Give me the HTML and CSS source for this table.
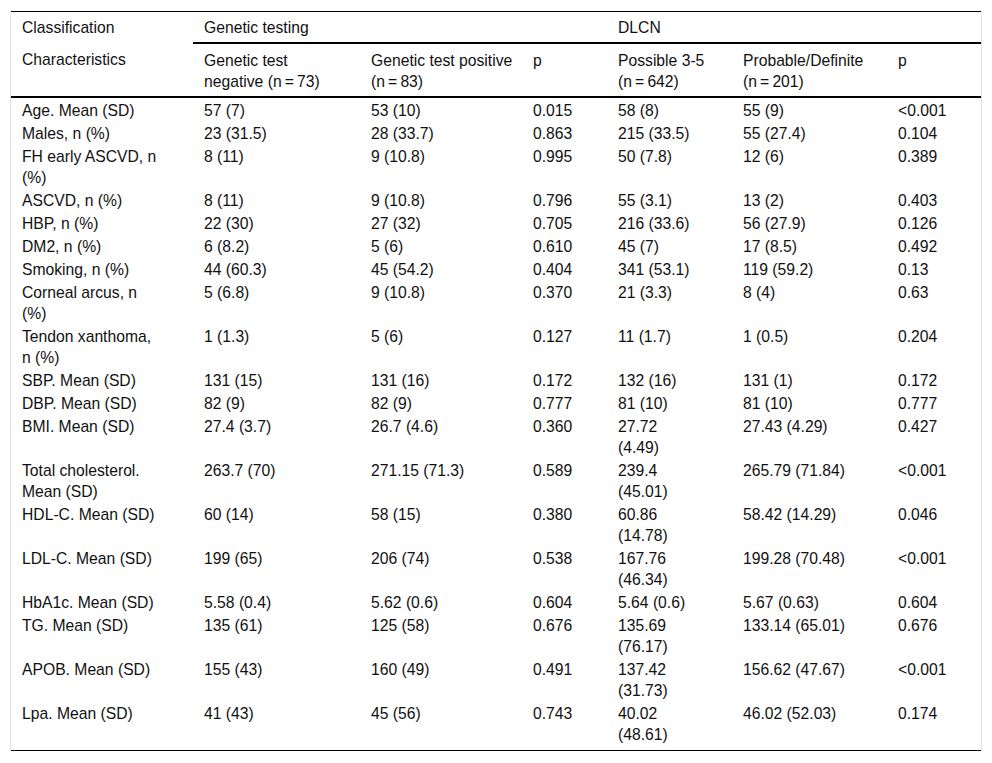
FILE: index.html
```html
<!DOCTYPE html>
<html lang="en">
<head>
<meta charset="utf-8">
<title>Characteristics by genetic testing and DLCN</title>
<link rel="stylesheet" href="styles.css">
</head>
<body>
<div class="table-wrap">
<table class="data-table">
<colgroup>
<col class="c1"><col class="c2"><col class="c3"><col class="c4"><col class="c5"><col class="c6"><col class="c7">
</colgroup>
<thead>
<tr class="group-row">
<th>Classification</th>
<th colspan="3" class="group">Genetic testing</th>
<th colspan="3" class="group">DLCN</th>
</tr>
<tr class="sub-row">
<th>Characteristics</th>
<th class="nw">Genetic test<br>negative (n&#8201;=&#8201;73)</th>
<th class="nw">Genetic test positive<br>(n&#8201;=&#8201;83)</th>
<th>p</th>
<th class="nw">Possible 3-5<br>(n&#8201;=&#8201;642)</th>
<th class="nw">Probable/Definite<br>(n&#8201;=&#8201;201)</th>
<th>p</th>
</tr>
</thead>
<tbody>
<tr><td>Age. Mean (SD)</td><td>57 (7)</td><td>53 (10)</td><td>0.015</td><td>58 (8)</td><td>55 (9)</td><td>&lt;0.001</td></tr>
<tr><td>Males, n (%)</td><td>23 (31.5)</td><td>28 (33.7)</td><td>0.863</td><td>215 (33.5)</td><td>55 (27.4)</td><td>0.104</td></tr>
<tr><td>FH early ASCVD, n (%)</td><td>8 (11)</td><td>9 (10.8)</td><td>0.995</td><td>50 (7.8)</td><td>12 (6)</td><td>0.389</td></tr>
<tr><td>ASCVD, n (%)</td><td>8 (11)</td><td>9 (10.8)</td><td>0.796</td><td>55 (3.1)</td><td>13 (2)</td><td>0.403</td></tr>
<tr><td>HBP, n (%)</td><td>22 (30)</td><td>27 (32)</td><td>0.705</td><td>216 (33.6)</td><td>56 (27.9)</td><td>0.126</td></tr>
<tr><td>DM2, n (%)</td><td>6 (8.2)</td><td>5 (6)</td><td>0.610</td><td>45 (7)</td><td>17 (8.5)</td><td>0.492</td></tr>
<tr><td>Smoking, n (%)</td><td>44 (60.3)</td><td>45 (54.2)</td><td>0.404</td><td>341 (53.1)</td><td>119 (59.2)</td><td>0.13</td></tr>
<tr><td>Corneal arcus, n (%)</td><td>5 (6.8)</td><td>9 (10.8)</td><td>0.370</td><td>21 (3.3)</td><td>8 (4)</td><td>0.63</td></tr>
<tr><td>Tendon xanthoma, n (%)</td><td>1 (1.3)</td><td>5 (6)</td><td>0.127</td><td>11 (1.7)</td><td>1 (0.5)</td><td>0.204</td></tr>
<tr><td>SBP. Mean (SD)</td><td>131 (15)</td><td>131 (16)</td><td>0.172</td><td>132 (16)</td><td>131 (1)</td><td>0.172</td></tr>
<tr><td>DBP. Mean (SD)</td><td>82 (9)</td><td>82 (9)</td><td>0.777</td><td>81 (10)</td><td>81 (10)</td><td>0.777</td></tr>
<tr><td>BMI. Mean (SD)</td><td>27.4 (3.7)</td><td>26.7 (4.6)</td><td>0.360</td><td>27.72 (4.49)</td><td>27.43 (4.29)</td><td>0.427</td></tr>
<tr><td>Total cholesterol. Mean (SD)</td><td>263.7 (70)</td><td>271.15 (71.3)</td><td>0.589</td><td>239.4 (45.01)</td><td>265.79 (71.84)</td><td>&lt;0.001</td></tr>
<tr><td>HDL-C. Mean (SD)</td><td>60 (14)</td><td>58 (15)</td><td>0.380</td><td>60.86 (14.78)</td><td>58.42 (14.29)</td><td>0.046</td></tr>
<tr><td>LDL-C. Mean (SD)</td><td>199 (65)</td><td>206 (74)</td><td>0.538</td><td>167.76 (46.34)</td><td>199.28 (70.48)</td><td>&lt;0.001</td></tr>
<tr><td>HbA1c. Mean (SD)</td><td>5.58 (0.4)</td><td>5.62 (0.6)</td><td>0.604</td><td>5.64 (0.6)</td><td>5.67 (0.63)</td><td>0.604</td></tr>
<tr><td>TG. Mean (SD)</td><td>135 (61)</td><td>125 (58)</td><td>0.676</td><td>135.69 (76.17)</td><td>133.14 (65.01)</td><td>0.676</td></tr>
<tr><td>APOB. Mean (SD)</td><td>155 (43)</td><td>160 (49)</td><td>0.491</td><td>137.42 (31.73)</td><td>156.62 (47.67)</td><td>&lt;0.001</td></tr>
<tr class="last"><td>Lpa. Mean (SD)</td><td>41 (43)</td><td>45 (56)</td><td>0.743</td><td>40.02 (48.61)</td><td>46.02 (52.03)</td><td>0.174</td></tr>
</tbody>
</table>
</div>
</body>
</html>
```

FILE: styles.css
```css
html, body {
  margin: 0;
  padding: 0;
  background: #ffffff;
}

body {
  font-family: "Liberation Sans", Arial, sans-serif;
  font-size: 15.7px;
  color: #111111;
}

.table-wrap {
  margin: 11px 0 0 10px;
  width: 970px;
  border-left: 1px solid #e2e2e2;
  border-right: 1px solid #e2e2e2;
}

.data-table {
  width: 970px;
  table-layout: fixed;
  border-collapse: collapse;
  border-top: 1px solid #000000;
  border-bottom: 1px solid #000000;
}

.c1 { width: 182px; }
.c2 { width: 167px; }
.c3 { width: 162px; }
.c4 { width: 85px; }
.c5 { width: 125px; }
.c6 { width: 155px; }
.c7 { width: 94px; }

.data-table th {
  font-weight: normal;
  text-align: left;
  vertical-align: top;
  line-height: 21px;
  padding: 5px 11px 4px 11px;
}

.sub-row th {
  padding-top: 6px;
  padding-bottom: 4px;
  border-bottom: 2px solid #000000;
}

.group-row th.group {
  border-bottom: 2px solid #000000;
}

.data-table th.nw {
  white-space: nowrap;
}

.data-table td {
  vertical-align: top;
  line-height: 21px;
  padding: 1.5px 11px 0.5px 11px;
}

.data-table td:nth-child(1) { padding-right: 31px; }
.data-table td:nth-child(5) { padding-right: 34px; }

.data-table tr.last td {
  padding-bottom: 5.5px;
}
```
